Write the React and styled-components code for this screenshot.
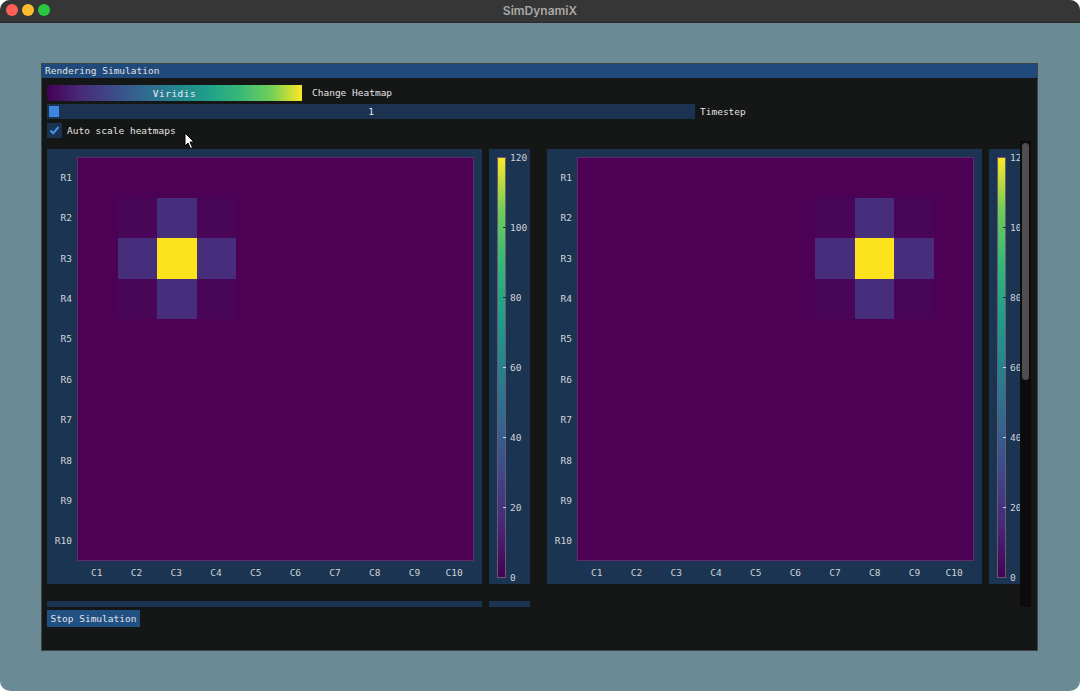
import React from 'react';
import styled, { createGlobalStyle } from 'styled-components';

const GlobalStyle = createGlobalStyle`
  html, body {
    margin: 0;
    padding: 0;
    background: #ffffff;
  }
  * {
    box-sizing: border-box;
  }
`;

const VIRIDIS = '#440154 0%, #482878 12.5%, #3e4989 25%, #31688e 37.5%, #26828e 50%, #1f9e89 62.5%, #35b779 75%, #6ece58 87.5%, #fde725 100%';
const MONO = `"DejaVu Sans Mono", "Liberation Mono", monospace`;

const MacWindow = styled.div`
  position: relative;
  width: 1080px;
  height: 691px;
  border-radius: 10px;
  overflow: hidden;
  background: #6a8b96;
  display: flex;
  flex-direction: column;
`;

const MacTitleBar = styled.div`
  position: relative;
  height: 23px;
  flex: none;
  background: #363636;
  border-bottom: 1px solid #2a2a2a;
  display: flex;
  align-items: center;
  justify-content: center;
`;

const Lights = styled.div`
  position: absolute;
  left: 6px;
  top: 4px;
  display: flex;
  gap: 4px;
`;

const Light = styled.span`
  width: 12px;
  height: 12px;
  border-radius: 50%;
  background: ${p => p.color};
`;

const AppTitle = styled.div`
  font-family: "Inter", "Open Sans", sans-serif;
  font-weight: 600;
  font-size: 12px;
  color: #a9a9a9;
  margin-top: -2px;
`;

const Desktop = styled.div`
  flex: 1;
  padding: 40px 0 0 41px;
`;

const ImWindow = styled.div`
  width: 997px;
  height: 588px;
  border: 1px solid #3e4447;
  background: #151616;
  display: flex;
  flex-direction: column;
  font-family: ${MONO};
  font-size: 9.5px;
  color: #e4e4e4;
`;

const ImTitle = styled.div`
  height: 14px;
  flex: none;
  background: #1f4a7b;
  padding-left: 3px;
  line-height: 14px;
  white-space: nowrap;
`;

const Body = styled.div`
  flex: 1;
  padding: 7px 0 0 5px;
  display: flex;
  flex-direction: column;
  gap: 4px;
  min-height: 0;
`;

const Row = styled.div`
  display: flex;
  align-items: center;
  gap: ${p => p.gap || 5}px;
  height: 15px;
  flex: none;
  white-space: nowrap;
`;

const ColormapButton = styled.div`
  width: 255px;
  height: 16px;
  background: linear-gradient(to right, ${VIRIDIS});
  display: flex;
  align-items: center;
  justify-content: center;
  color: #eef;
  letter-spacing: 0.5px;
  margin-top: 1px;
`;

const SliderFrame = styled.div`
  position: relative;
  width: 648px;
  height: 15px;
  background: #1b3350;
  display: flex;
  align-items: center;
  justify-content: center;
`;

const SliderGrab = styled.div`
  position: absolute;
  left: 2px;
  top: 2px;
  width: 10px;
  height: 11px;
  background: #3d85e0;
`;

const CheckBox = styled.div`
  width: 15px;
  height: 15px;
  background: #1b3350;
  display: flex;
  align-items: center;
  justify-content: center;
`;

const Child = styled.div`
  position: relative;
  width: 984px;
  height: 466px;
  flex: none;
  margin-top: -1px;
  overflow: hidden;
  padding-top: 8px;
`;

const ChildContent = styled.div`
  display: flex;
  flex-direction: column;
  gap: 17px;
`;

const PlotRow = styled.div`
  display: flex;
  gap: 17px;
`;

const PlotPair = styled.div`
  display: flex;
  gap: 7px;
  flex: none;
`;

const PlotFrame = styled.div`
  width: 435px;
  height: 435px;
  background: #1b3451;
  padding-top: 8px;
  display: grid;
  grid-template-columns: 30px 397px;
  grid-template-rows: 404px 23px;
  color: #cfd3d8;
`;

const RowLabels = styled.div`
  display: flex;
  flex-direction: column;
`;

const RowLabel = styled.div`
  flex: 1;
  display: flex;
  align-items: center;
  justify-content: flex-end;
  padding-right: 5px;
`;

const HeatGrid = styled.div`
  display: grid;
  grid-template-columns: repeat(10, 1fr);
  grid-template-rows: repeat(10, 1fr);
  border: 1px solid #65296f;
  background: #4c0154;
`;

const Cell = styled.div`
  background: ${p => p.color};
`;

const ColLabels = styled.div`
  grid-column: 2;
  display: flex;
`;

const ColLabel = styled.div`
  flex: 1;
  display: flex;
  align-items: center;
  justify-content: center;
`;

const ColorbarFrame = styled.div`
  width: 41px;
  height: 435px;
  background: #1b3451;
  padding: 8px 0 0 8px;
  display: flex;
  color: #cfd3d8;
`;

const Bar = styled.div`
  width: 9px;
  height: 421px;
  flex: none;
  border: 1px solid #6e5a6e;
  background: linear-gradient(to top, ${VIRIDIS});
`;

const Ticks = styled.div`
  height: 431px;
  margin-top: -5px;
  margin-left: -3px;
  display: flex;
  flex-direction: column;
  justify-content: space-between;
`;

const Tick = styled.div`
  height: 10px;
  display: flex;
  align-items: center;
  gap: 4px;
  &::before {
    content: '';
    width: 3px;
    height: 1px;
    background: ${p => (p.dark ? '#203020' : '#d8d8d8')};
    opacity: ${p => (p.hide ? 0 : 1)};
  }
`;

const Scrollbar = styled.div`
  position: absolute;
  right: 0;
  top: 0;
  width: 11px;
  height: 100%;
  background: #0c0c0c;
  padding: 2px;
`;

const ScrollGrab = styled.div`
  width: 7px;
  height: 237px;
  border-radius: 4px;
  background: #4e4e4e;
`;

const Button = styled.div`
  width: 93px;
  height: 17px;
  flex: none;
  margin-top: -1px;
  background: #215083;
  display: flex;
  align-items: center;
  justify-content: center;
  white-space: nowrap;
`;

const Cursor = styled.svg`
  position: absolute;
  left: 184px;
  top: 132px;
`;

const BASE = '#4c0154';
const DIAG = '#490658';
const NEAR = '#472e7c';
const HOT = '#fde31c';

function cellColor(r, c, hr, hc) {
  const dr = Math.abs(r - hr);
  const dc = Math.abs(c - hc);
  if (dr === 0 && dc === 0) return HOT;
  if (dr + dc === 1) return NEAR;
  if (dr === 1 && dc === 1) return DIAG;
  return BASE;
}

const range = [...Array(10).keys()];
const tickLabels = ['120', '100', '80', '60', '40', '20', '0'];

const Heatmap = ({ hotRow, hotCol }) => (
  <PlotFrame>
    <RowLabels>
      {range.map(i => (
        <RowLabel key={i}>R{i + 1}</RowLabel>
      ))}
    </RowLabels>
    <HeatGrid>
      {range.map(r =>
        range.map(c => (
          <Cell key={`${r}-${c}`} color={cellColor(r, c, hotRow, hotCol)} />
        ))
      )}
    </HeatGrid>
    <ColLabels>
      {range.map(i => (
        <ColLabel key={i}>C{i + 1}</ColLabel>
      ))}
    </ColLabels>
  </PlotFrame>
);

const Colorbar = () => (
  <ColorbarFrame>
    <Bar />
    <Ticks>
      {tickLabels.map((t, i) => (
        <Tick key={t} dark={i < 3} hide={i === 0 || i === 6}>
          {t}
        </Tick>
      ))}
    </Ticks>
  </ColorbarFrame>
);

const App = () => {
  return (
    <>
      <GlobalStyle />
      <MacWindow>
        <MacTitleBar>
          <Lights>
            <Light color="#fe5f57" />
            <Light color="#febc2e" />
            <Light color="#28c840" />
          </Lights>
          <AppTitle>SimDynamiX</AppTitle>
        </MacTitleBar>
        <Desktop>
          <ImWindow>
            <ImTitle>Rendering Simulation</ImTitle>
            <Body>
              <Row gap={10}>
                <ColormapButton>Viridis</ColormapButton>
                <span>Change Heatmap</span>
              </Row>
              <Row gap={5}>
                <SliderFrame>
                  <SliderGrab />
                  1
                </SliderFrame>
                <span>Timestep</span>
              </Row>
              <Row gap={5}>
                <CheckBox>
                  <svg width="11" height="11" viewBox="0 0 11 11">
                    <path d="M1.5 5.5 L4.2 8.3 L9.5 2" fill="none" stroke="#4296fa" strokeWidth="2" />
                  </svg>
                </CheckBox>
                <span>Auto scale heatmaps</span>
              </Row>
              <Child>
                <ChildContent>
                  <PlotRow>
                    <PlotPair>
                      <Heatmap hotRow={2} hotCol={2} />
                      <Colorbar />
                    </PlotPair>
                    <PlotPair>
                      <Heatmap hotRow={2} hotCol={7} />
                      <Colorbar />
                    </PlotPair>
                  </PlotRow>
                  <PlotRow>
                    {/* next row of heatmaps, scrolled out of view */}
                    <PlotPair>
                      <PlotFrame />
                      <ColorbarFrame />
                    </PlotPair>
                  </PlotRow>
                </ChildContent>
                <Scrollbar>
                  <ScrollGrab />
                </Scrollbar>
              </Child>
              <Button>Stop Simulation</Button>
            </Body>
          </ImWindow>
        </Desktop>
        <Cursor width="12" height="18" viewBox="0 0 12 18">
          <path d="M1 1 L1 14 L4 11 L6.5 16.5 L8.5 15.5 L6 10 L10 10 Z" fill="#ffffff" stroke="#000000" strokeWidth="1" />
        </Cursor>
      </MacWindow>
    </>
  );
};

export default App;
